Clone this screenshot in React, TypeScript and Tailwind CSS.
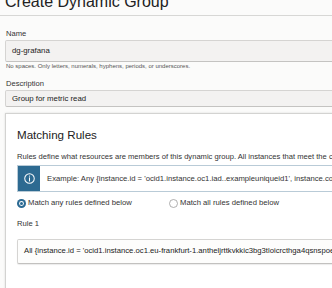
function Radio({ checked }: { checked: boolean }) {
  return (
    <svg width="9" height="9" viewBox="0 0 9 9" className="shrink-0">
      {checked ? (
        <>
          <circle cx="4.5" cy="4.5" r="4.5" fill="#2b6a93" />
          <circle cx="4.5" cy="4.5" r="2.4" fill="#ffffff" />
          <circle cx="4.5" cy="4.5" r="1.5" fill="#2b6a93" />
        </>
      ) : (
        <circle cx="4.5" cy="4.5" r="4" fill="#ffffff" stroke="#9a9a9a" strokeWidth="0.8" />
      )}
    </svg>
  );
}

export default function App() {
  return (
    <div className="w-[332px] h-[288px] overflow-hidden bg-[#fbfbfa] font-['Liberation_Sans',Arial,sans-serif] text-[#2d2d2d]">
      <div className="w-[600px]">
        <div className="h-[16px] overflow-hidden border-b border-[#d7d7d5]">
          <div className="pl-[5px] -mt-[6px] text-[16px] leading-[16px] text-[#222]">Create Dynamic Group</div>
        </div>

        <div className="px-[5px]">
          <div className="mt-[13px] pl-[1px] text-[7.6px] leading-[10px] text-[#333]">Name</div>
          <div className="mt-[1px] h-[22px] flex items-center border border-[#d5d4d2] border-b-[#c4c3c1] rounded-[2px] bg-[#f3f2f1] pl-[6px] text-[7.8px] text-[#222]">
            dg-grafana
          </div>
          <div className="pl-[1px] text-[6px] leading-[8px] text-[#555]">
            No spaces. Only letters, numerals, hyphens, periods, or underscores.
          </div>

          <div className="mt-[9px] pl-[1px] text-[7.6px] leading-[10px] text-[#333]">Description</div>
          <div className="mt-[1px] h-[17px] flex items-center border border-[#d5d4d2] border-b-[#c4c3c1] rounded-[2px] bg-[#f3f2f1] pl-[6px] text-[7.8px] text-[#222]">
            Group for metric read
          </div>

          <div className="mt-[6px] h-[200px] border border-[#d3d3d1] bg-white shadow-[0_0_2px_rgba(0,0,0,0.12)] px-[11px] pt-[14px]">
            <div className="text-[11.6px] leading-[14px] text-[#222]">Matching Rules</div>
            <div className="mt-[10px] text-[7.6px] leading-[10px] text-[#333]">
              Rules define what resources are members of this dynamic group. All instances that meet the criteria are added automatically.
            </div>

            <div className="mt-[3px] h-[27px] flex border border-[#b9cbd7] bg-white">
              <div className="w-[22px] shrink-0 bg-[#2d6a91] flex items-center justify-center">
                <svg width="11" height="11" viewBox="0 0 12 12" fill="none" stroke="#ffffff" strokeWidth="1.1">
                  <circle cx="6" cy="6" r="5.2" />
                  <line x1="6" y1="5.2" x2="6" y2="8.8" strokeLinecap="round" />
                  <circle cx="6" cy="3.4" r="0.6" fill="#ffffff" stroke="none" />
                </svg>
              </div>
              <div className="flex items-center pl-[7px] text-[7.7px] text-[#333] whitespace-nowrap">
                Example: Any {"{"}instance.id = 'ocid1.instance.oc1.iad..exampleuniqueid1', instance.compartment.id = 'ocid1.compartment.oc1..exampleuniqueid2'{"}"}
              </div>
            </div>

            <div className="mt-[6px] h-[10px] flex items-center text-[7.7px] text-[#333]">
              <div className="w-[152px] flex items-center gap-[2px]">
                <Radio checked />
                <span>Match any rules defined below</span>
              </div>
              <div className="flex items-center gap-[2px]">
                <Radio checked={false} />
                <span>Match all rules defined below</span>
              </div>
            </div>

            <div className="mt-[11px] text-[7.6px] leading-[10px] text-[#333]">Rule 1</div>
            <div className="mt-[10px] h-[25px] border border-[#d5d4d2] border-b-[#c2c1bf] rounded-[2px] bg-[#fdfdfc] shadow-[0_1px_1px_rgba(0,0,0,0.08)] pl-[6px] pt-[6px] text-[7.7px] leading-[10px] text-[#222] whitespace-nowrap">
              All {"{"}instance.id = 'ocid1.instance.oc1.eu-frankfurt-1.antheljrttkvkkic3bg3tloicrcthga4qsnspoexampleuniqueid'{"}"}
            </div>
          </div>
        </div>
      </div>
    </div>
  );
}
